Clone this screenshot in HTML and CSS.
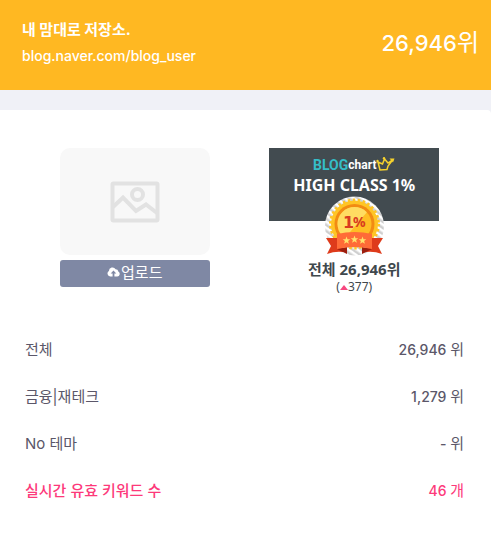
FILE: index.html
```html
<!DOCTYPE html>
<html lang="ko">
<head>
<meta charset="utf-8">
<meta name="viewport" content="width=device-width, initial-scale=1">
<title>내 맘대로 저장소.</title>
<link rel="stylesheet" href="styles.css">
</head>
<body>
<header class="hero">
  <div>
    <h1 class="hero-title">내 맘대로 저장소.</h1>
    <a class="hero-link" href="#">blog.naver.com/blog_user</a>
  </div>
  <p class="hero-rank">26,946<span class="unit">위</span></p>
</header>
<main class="card">
  <div class="media">
    <section class="photo">
      <div class="placeholder">
        <svg width="50" height="42" viewBox="0 0 50 42" fill="none" stroke="#e2e2e2" stroke-width="4">
          <rect x="2.5" y="2.5" width="45" height="37" rx="1"/>
          <circle cx="27.500" cy="13.500" r="5.500"/>
          <path d="M3 26 13 16.500 26 30 36 23.500 47 32"/>
        </svg>
      </div>
      <button class="upload" type="button">
        <svg width="13" height="10" viewBox="0 0 13 10"><path fill="#fff" d="M3.200 9.500A3 3 0 0 1 1.900 4 3.600 3.600 0 0 1 8.600 2.200 2.700 2.700 0 0 1 11.300 4.600 2.600 2.600 0 0 1 10.300 9.500Z"/><path fill="#7f88a4" d="M6.500 3.500 9.300 6.500H7.400V10H5.600V6.500H3.700Z"/></svg>업로드
      </button>
    </section>
    <section class="award">
      <div class="banner">
        <div class="brand"><span class="brand-blog">BLOG</span><span class="brand-chart">chart</span>
          <svg width="19" height="16" viewBox="0 0 19 16" fill="none" stroke="#f6d22d" stroke-width="1.500"><path d="M4 13 2 5 6.500 7 8.500 2 12 6 17 2.500 12 9 11 12.500Z"/><g fill="#f6d22d" stroke="none"><circle cx="1.500" cy="4" r="1.200"/><circle cx="8" cy="1.300" r="1.200"/><path d="M13.500 1.500H18.500L17 5.500Z"/></g></svg>
        </div>
        <p class="grade">HIGH CLASS 1%</p>
        <svg class="medal" width="60" height="62" viewBox="0 0 60 62">
          <defs>
            <pattern id="stripe" width="5" height="5" patternUnits="userSpaceOnUse" patternTransform="rotate(-55)"><rect width="5" height="5" fill="#fff"/><rect width="2.500" height="5" fill="#cfcfcf"/></pattern>
            <clipPath id="disc"><circle cx="29.500" cy="29" r="17"/></clipPath>
          </defs>
          <circle cx="29.500" cy="31" r="29.500" fill="url(#stripe)"/>
          <circle cx="29.500" cy="29" r="23.500" fill="#ffc526"/>
          <circle cx="29.500" cy="29" r="24" fill="none" stroke="#ffc526" stroke-width="3" stroke-dasharray="2.500 2.527"/>
          <circle cx="29.500" cy="29" r="20" fill="#f28b13"/>
          <circle cx="29.500" cy="29" r="17" fill="#ffbd24"/>
          <path d="M10 10H48L14 50Z" fill="#ffdc62" clip-path="url(#disc)"/>
          <text class="medal-one" x="18" y="33">1</text><text class="medal-percent" x="28" y="32">%</text>
          <path d="M1 43H18V57Q10 56 2 59L6 51ZM58 43H41V57Q49 56 57 59L53 51Z" fill="#de3b1b"/>
          <path d="M12 54 22 52V59ZM47 54 37 52V59Z" fill="#9d1e0e"/>
          <path d="M12 39Q29.500 35 47 39V54Q29.500 50 12 54Z" fill="#ff6b37"/>
          <g fill="#ffe36c"><path id="star" d="M29.500 40.500 30.500 43.200 33.300 43.300 31.100 45 31.900 47.800 29.500 46.200 27.100 47.800 27.900 45 25.700 43.300 28.500 43.200Z"/><use href="#star" x="-8" y="1"/><use href="#star" x="8" y="1"/></g>
        </svg>
      </div>
      <p class="award-rank">전체 26,946위</p>
      <p class="change">(<svg width="8" height="5" viewBox="0 0 8 5"><path d="M4 0 8 5H0Z" fill="#f7477f"/></svg>377)</p>
    </section>
  </div>
  <dl class="stats">
    <div class="row"><dt>전체</dt><dd>26,946 <span class="unit">위</span></dd></div>
    <div class="row"><dt>금융|재테크</dt><dd>1,279 <span class="unit">위</span></dd></div>
    <div class="row"><dt>No 테마</dt><dd>- <span class="unit">위</span></dd></div>
    <div class="row accent"><dt>실시간 유효 키워드 수</dt><dd>46 <span class="unit">개</span></dd></div>
  </dl>
</main>
</body>
</html>
```
FILE: styles.css
```css
* { box-sizing: border-box; }
body {
  margin: 0;
  background: #f0f1f7;
  color: #5b5769;
  font-family: Inter, "Noto Sans CJK KR", sans-serif;
  font-size: 14px;
}
h1, p, dl, dd { margin: 0; }
svg { flex: none; }
.hero {
  display: flex;
  justify-content: space-between;
  padding: 16px 12px 20px 22px;
  background: #ffb822;
  color: #fff;
}
.hero-title { font-size: 15px; line-height: 27px; font-weight: 700; }
.hero-link {
  display: block;
  color: inherit;
  line-height: 26px;
  font-weight: 500;
  text-decoration: none;
}
.hero-rank { font-size: 22px; line-height: 53px; font-weight: 500; }
.unit { font-weight: 400; }
.hero-rank .unit { font-size: 24px; }
.card {
  min-height: calc(100vh - 110px);
  margin-top: 20px;
  padding: 38px 27px 24px 25px;
  border-radius: 0 4px 0 0;
  background: #fff;
}
.media { display: grid; grid-template-columns: 1fr 1fr; justify-items: center; }
.photo { width: 150px; }
.placeholder {
  display: flex;
  align-items: center;
  justify-content: center;
  height: 107px;
  border-radius: 10px;
  background: #f8f8f8;
}
.upload {
  display: flex;
  align-items: center;
  justify-content: center;
  gap: 1px;
  width: 100%;
  height: 27px;
  margin-top: 5px;
  padding: 0 0 3px;
  border: 0;
  border-radius: 3px;
  background: #7f88a4;
  color: #fff;
  font: 400 15px/24px "Noto Sans CJK KR", sans-serif;
}
.award {
  width: 170px;
  color: #3f484d;
  font-family: "Noto Sans", "Noto Sans CJK KR", sans-serif;
  text-align: center;
}
.banner { position: relative; height: 73px; padding-top: 8px; background: #424b50; }
.brand { display: flex; justify-content: center; align-items: center; height: 18px; }
.brand-blog { color: #35bdc7; font: 700 14px/18px Roboto, sans-serif; }
.brand-chart { color: #fff; font: 700 12px/18px Roboto, sans-serif; }
.grade { color: #fff; font-size: 16px; line-height: 22px; font-weight: 700; }
.medal { position: absolute; top: 47px; left: 56px; }
.medal-one { font: 700 16px "DejaVu Sans", sans-serif; fill: #d83b20; }
.medal-percent { font: 700 14px "Noto Sans", sans-serif; fill: #d83b20; }
.award-rank { margin-top: 38px; font-size: 15px; line-height: 20px; font-weight: 700; }
.change {
  display: flex;
  justify-content: center;
  align-items: center;
  font-size: 12px;
  line-height: 16px;
}
.stats { margin-top: 31px; }
.row { display: flex; justify-content: space-between; line-height: 47px; }
dt { font-size: 15px; }
dd { font-weight: 500; }
dd .unit { font-size: 15px; }
.accent { color: #fd397a; }
.accent dt { font-weight: 500; }
```
